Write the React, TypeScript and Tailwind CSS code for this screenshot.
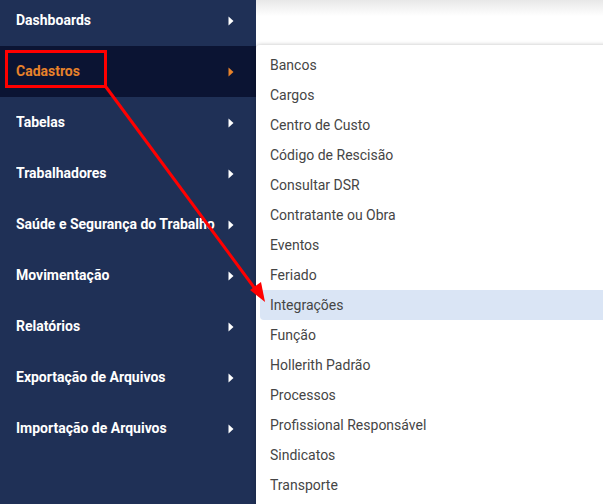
import React from "react";

const side = [
  "Dashboards",
  "Cadastros",
  "Tabelas",
  "Trabalhadores",
  "Saúde e Segurança do Trabalho",
  "Movimentação",
  "Relatórios",
  "Exportação de Arquivos",
  "Importação de Arquivos",
];

const items = [
  "Bancos",
  "Cargos",
  "Centro de Custo",
  "Código de Rescisão",
  "Consultar DSR",
  "Contratante ou Obra",
  "Eventos",
  "Feriado",
  "Integrações",
  "Função",
  "Hollerith Padrão",
  "Processos",
  "Profissional Responsável",
  "Sindicatos",
  "Transporte",
];

function Caret({ color }: { color: string }) {
  return (
    <svg width="6" height="10" viewBox="0 0 6 10">
      <path d="M0.5 0.5 L5.5 5 L0.5 9.5 Z" fill={color} />
    </svg>
  );
}

export default function App() {
  return (
    <div
      className="relative w-[603px] h-[504px] overflow-hidden flex bg-white"
      style={{ fontFamily: "Roboto, 'Liberation Sans', sans-serif" }}
    >
      <div className="w-[256px] shrink-0 bg-[#1f3056] flex flex-col">
        <div className="-mt-[5px]">
          {side.map((s) => {
            const active = s === "Cadastros";
            return (
              <div
                key={s}
                className={`h-[51px] flex items-center pl-4 pr-0 ${active ? "bg-[#0b1433]" : ""}`}
              >
                <span
                  className={`text-[14px] font-bold whitespace-nowrap w-[212px] overflow-hidden ${active ? "text-[#e8822a]" : "text-white"}`}
                >
                  {s}
                </span>
                <Caret color={active ? "#e8822a" : "#ffffff"} />
              </div>
            );
          })}
        </div>
      </div>
      <div className="flex-1 bg-white">
        <div className="h-[16px] bg-gradient-to-b from-[#e8e8e8] to-white" />
      </div>

      <div className="absolute left-[256px] top-[45px] w-[360px] h-[470px] bg-white rounded-tl-[4px] shadow-[0_0_4px_rgba(0,0,0,0.25)] pt-[5px]">
        {items.map((it) => {
          const hl = it === "Integrações";
          return (
            <div
              key={it}
              className={`h-[30px] flex items-center ml-[4px] pl-[10px] text-[14px] text-[#454545] ${hl ? "bg-[#dae5f5] rounded-l-[4px]" : ""}`}
            >
              {it}
            </div>
          );
        })}
      </div>

      <svg className="absolute left-0 top-0 pointer-events-none" width="603" height="504">
        <rect x="6.5" y="51.5" width="99" height="35" fill="none" stroke="#ff0000" strokeWidth="3" />
        <line x1="106" y1="87" x2="256" y2="290" stroke="#ff0000" strokeWidth="3" />
        <path d="M265 302 L250 290 L261 282 Z" fill="#ff0000" />
      </svg>
    </div>
  );
}
